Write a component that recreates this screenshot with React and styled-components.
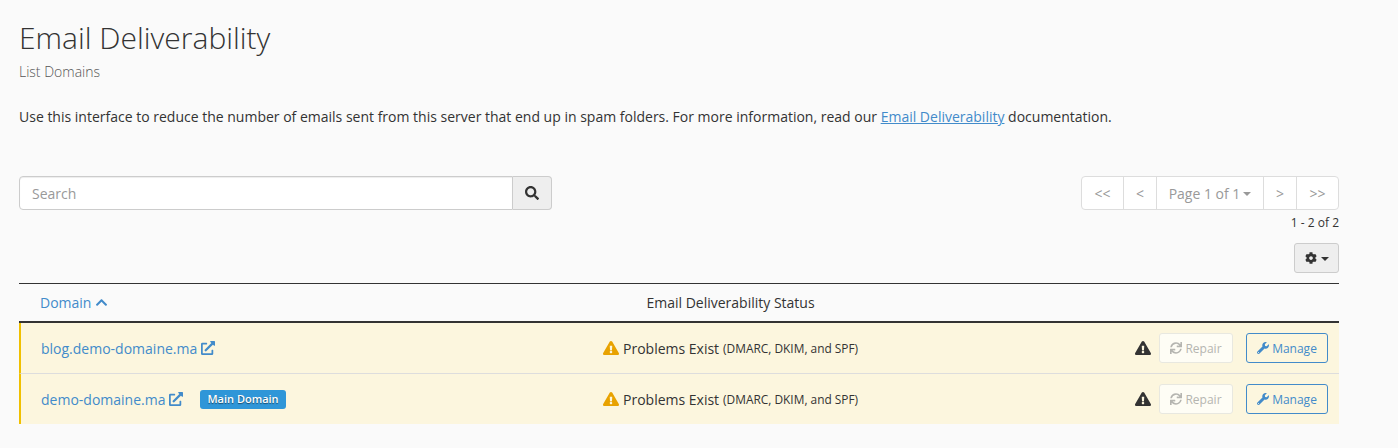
import React from "react";
import styled, { createGlobalStyle } from "styled-components";
import { FaSearch, FaCog, FaChevronUp, FaExternalLinkAlt, FaExclamationTriangle, FaSync, FaWrench } from "react-icons/fa";

const Global = createGlobalStyle`
  html, body { margin: 0; padding: 0; background: #fafafa; }
  body { font-family: "Open Sans", "Liberation Sans", sans-serif; font-size: 14px; color: #333; }
  * { box-sizing: border-box; }
`;
const Page = styled.div`
  width: 1339px; height: 448px; margin-left: 0; padding: 0 0 0 19px; overflow: hidden;
`;
const Title = styled.h1`
  margin: 0; padding-top: 18px; font-size: 30px; line-height: 40px; font-weight: 300; color: #333;
`;
const Subtitle = styled.div`
  margin-top: 4px; font-size: 14px; line-height: 20px; font-weight: 300; color: #555;
`;
const Intro = styled.p`
  margin: 25px 0 0; font-size: 14px; line-height: 20px; color: #333;
  a { color: #428bca; text-decoration: underline; }
`;
const Toolbar = styled.div`
  margin-top: 49px; display: flex; justify-content: space-between; align-items: flex-start;
`;
const SearchGroup = styled.div`
  display: flex; width: 533px; height: 34px;
`;
const SearchInput = styled.div`
  flex: 1; background: #fff; border: 1px solid #ccc; border-radius: 4px 0 0 4px;
  padding-left: 12px; line-height: 33px; color: #999; font-size: 14px;
  box-shadow: inset 0 1px 1px rgba(0,0,0,.075);
`;
const SearchButton = styled.div`
  width: 39px; background: #eee; border: 1px solid #ccc; border-left: 0; border-radius: 0 4px 4px 0;
  display: flex; align-items: center; justify-content: center; color: #333; font-size: 14px;
`;
const PagerColumn = styled.div`
  display: flex; flex-direction: column; align-items: flex-end;
`;
const Pager = styled.div`
  display: flex; height: 34px; background: #fff; border: 1px solid #ddd; border-radius: 4px;
`;
const PagerCell = styled.div`
  width: ${p => p.$w}px; display: flex; align-items: center; justify-content: center; gap: 3px;
  color: #999; font-size: 14px; border-left: ${p => p.$first ? "0" : "1px solid #ddd"};
`;
const Caret = styled.span`
  display: inline-block; width: 0; height: 0; border-left: 4px solid transparent; border-right: 4px solid transparent;
  border-top: 4px solid ${p => p.$c || "#999"}; margin-top: 2px;
`;
const Count = styled.div`
  margin-top: 4px; font-size: 12px; line-height: 17px; color: #333;
`;
const GearRow = styled.div`
  display: flex; justify-content: flex-end; margin-top: 12px;
`;
const GearButton = styled.div`
  width: 45px; height: 30px; background: #eee; border: 1px solid #ccc; border-radius: 3px;
  display: flex; align-items: center; justify-content: center; gap: 4px; color: #333; font-size: 12px;
`;
const Table = styled.div`
  margin-top: 10px; width: 1320px; border-top: 1px solid #333;
`;
const HeaderRow = styled.div`
  display: grid; grid-template-columns: 1fr; height: 39px; border-bottom: 2px solid #333; position: relative;
`;
const Columns = styled.div`
  display: grid; grid-template-columns: 450px 523px 347px; align-items: center; height: ${p => p.$h}px;
`;
const DomainHead = styled.div`
  padding-left: 21px; color: #428bca; font-size: 14px; display: flex; align-items: center; gap: 4px; svg { font-size: 13px; }
`;
const StatusHead = styled.div`
  text-align: center; font-size: 14px; color: #333; padding-right: 0;
`;
const Row = styled.div`
  background: #fcf6de; border-left: 2px solid #f0c000; border-bottom: ${p => p.$last ? "0" : "1px solid #ddd"};
`;
const DomainCell = styled.div`
  padding-left: 20px; display: flex; align-items: center; color: #428bca; font-size: 14px;
`;
const LinkIcon = styled(FaExternalLinkAlt)`
  margin-left: 4px; font-size: 14px;
`;
const Badge = styled.span`
  margin-left: 17px; background: #2f96d8; color: #fff; font-size: 11px; font-weight: 600; line-height: 18px; height: 19px;
  padding: 0 7px; border-radius: 3px; text-shadow: 0 1px 1px rgba(0,0,0,.5);
`;
const StatusCell = styled.div`
  display: flex; align-items: center; padding-left: 132px; font-size: 14px; color: #333; white-space: nowrap;
  svg { color: #e8a200; font-size: 16px; margin-right: 4px; }
  small { font-size: 11.9px; margin-left: 4px; }
`;
const ActionCell = styled.div`
  display: flex; align-items: center; justify-content: flex-end; padding-right: 13px;
`;
const Alert = styled(FaExclamationTriangle)`
  color: #333; font-size: 16px; margin-right: 8px;
`;
const ActionButton = styled.div`
  height: 30px; width: ${p => p.$w}px; margin-left: ${p => p.$ml || 0}px; border-radius: 3px; font-size: 12px;
  display: flex; align-items: center; justify-content: center; gap: 3px;
  background: ${p => p.$primary ? "transparent" : "#fefdf5"};
  border: 1px solid ${p => p.$primary ? "#428bca" : "#e8e8e0"};
  color: ${p => p.$primary ? "#428bca" : "#b5b5b0"};
`;

const rows = [
  { name: "blog.demo-domaine.ma" },
  { name: "demo-domaine.ma", main: true, last: true },
];

export default function App() {
  return (
    <Page>
      <Global />
      <Title>Email Deliverability</Title>
      <Subtitle>List Domains</Subtitle>
      <Intro>
        Use this interface to reduce the number of emails sent from this server that end up in spam folders. For more information, read our <a href="#x">Email Deliverability</a> documentation.
      </Intro>
      <Toolbar>
        <SearchGroup>
          <SearchInput>Search</SearchInput>
          <SearchButton><FaSearch /></SearchButton>
        </SearchGroup>
        <PagerColumn>
          <Pager>
            <PagerCell $first $w={41}>&lt;&lt;</PagerCell>
            <PagerCell $w={33}>&lt;</PagerCell>
            <PagerCell $w={107}>Page 1 of 1<Caret /></PagerCell>
            <PagerCell $w={33}>&gt;</PagerCell>
            <PagerCell $w={42}>&gt;&gt;</PagerCell>
          </Pager>
          <Count>1 - 2 of 2</Count>
        </PagerColumn>
      </Toolbar>
      <GearRow>
        <GearButton><FaCog /><Caret $c="#333" /></GearButton>
      </GearRow>
      <Table>
        <HeaderRow>
          <Columns $h={37}>
            <DomainHead>Domain <FaChevronUp /></DomainHead>
            <StatusHead>Email Deliverability Status</StatusHead>
            <div />
          </Columns>
        </HeaderRow>
        {rows.map(r => (
          <Row key={r.name} $last={r.last}>
            <Columns $h={50}>
              <DomainCell>
                {r.name}<LinkIcon />
                {r.main && <Badge>Main Domain</Badge>}
              </DomainCell>
              <StatusCell><FaExclamationTriangle />Problems Exist<small>(DMARC, DKIM, and SPF)</small></StatusCell>
              <ActionCell>
                <Alert />
                <ActionButton $w={74}><FaSync />Repair</ActionButton>
                <ActionButton $primary $w={82} $ml={13}><FaWrench />Manage</ActionButton>
              </ActionCell>
            </Columns>
          </Row>
        ))}
      </Table>
    </Page>
  );
}
